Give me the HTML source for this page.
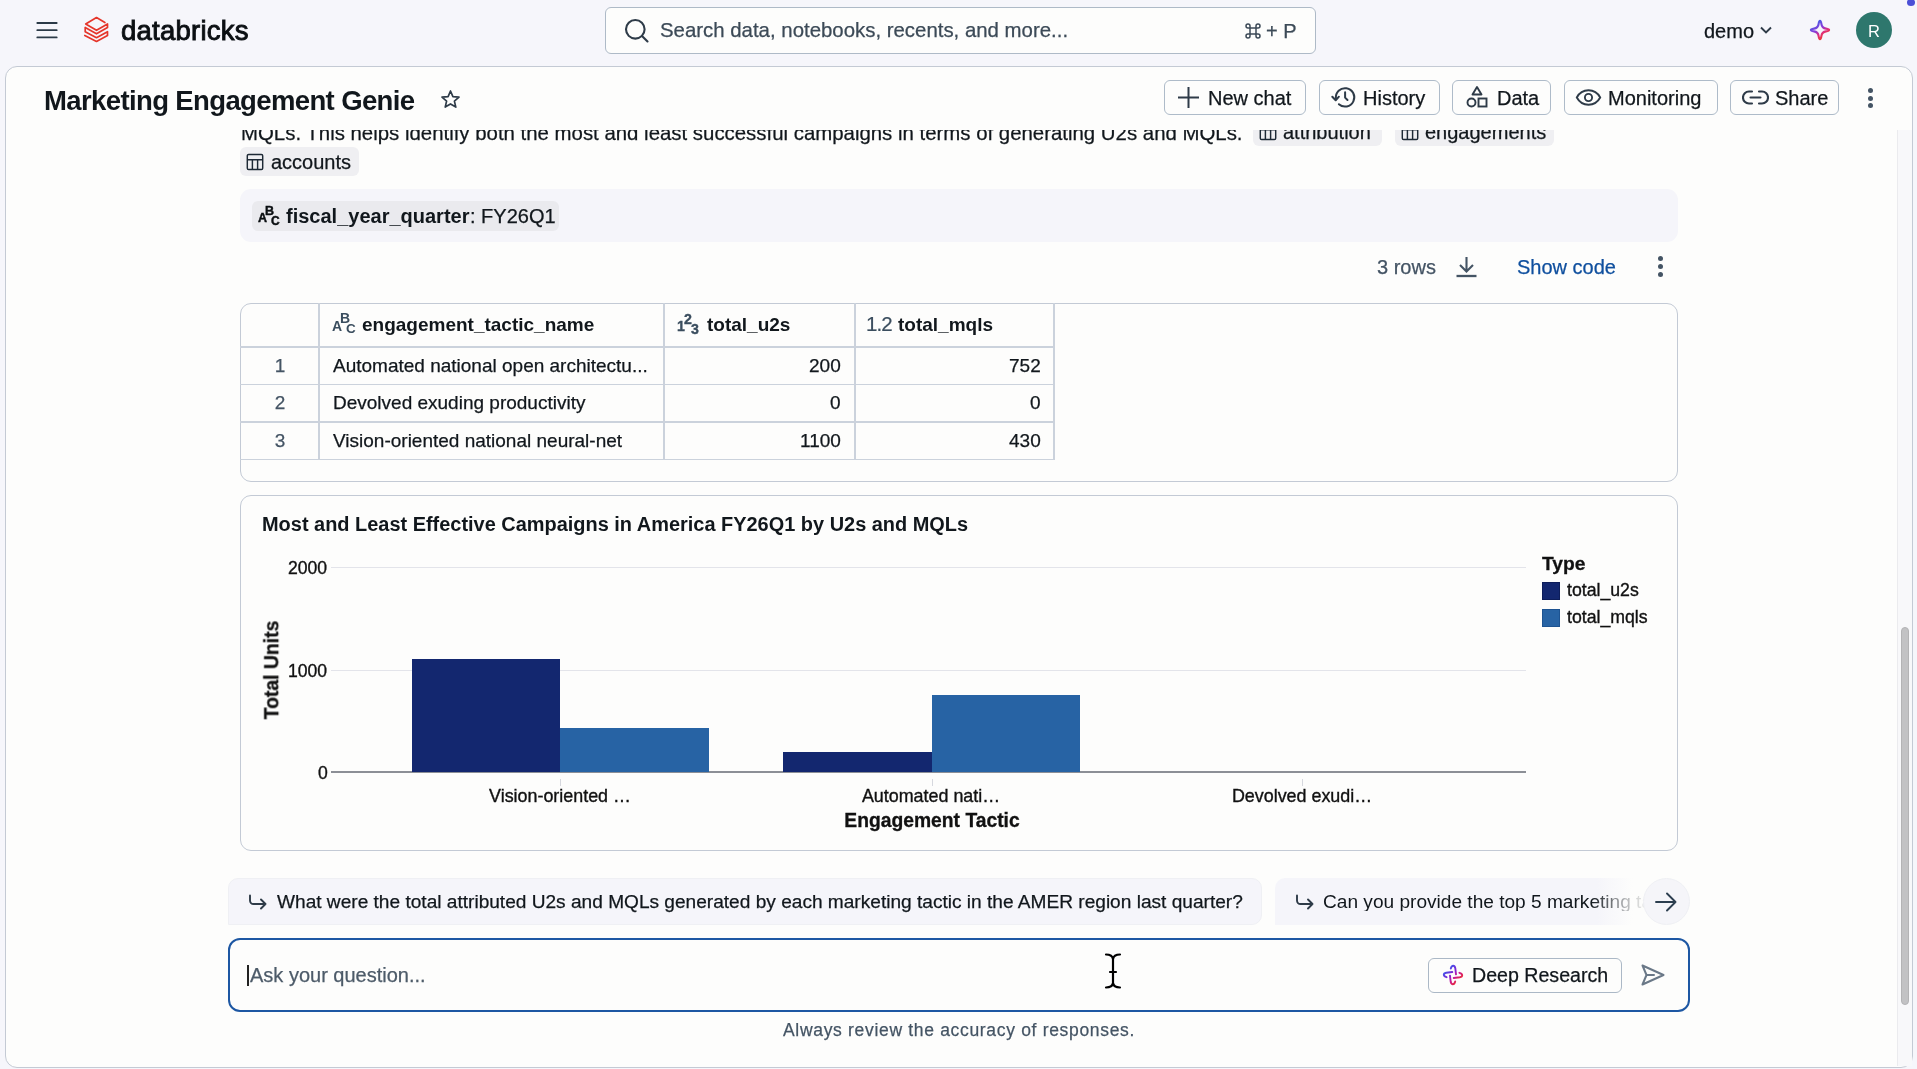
<!DOCTYPE html>
<html><head><meta charset="utf-8"><title>Marketing Engagement Genie</title>
<style>
*{box-sizing:border-box;margin:0;padding:0}
html,body{width:1917px;height:1069px;overflow:hidden;background:#f6f6fb;font-family:"Liberation Sans",sans-serif;color:#11171c;position:relative}
.a{position:absolute}
.t{position:absolute;white-space:nowrap;will-change:transform}
</style></head><body>

<svg class="a" style="left:35px;top:21px;" width="24" height="18" viewBox="0 0 24 18" fill="none"><path d="M2.3 2H21.7M2.3 9.2H21.7M2.3 16.4H21.7" stroke="#2b3a47" stroke-width="1.8" stroke-linecap="round"/></svg>
<svg class="a" style="left:80px;top:14px;" width="32" height="32" viewBox="0 0 32 32" fill="none"><path d="M24.9 8.5L16.5 3.6L5.7 9.9L16.5 16.3L27.5 9.9V13.5L16.5 19.8L5.2 13.5V17.7L16.5 23.7L27.5 17.7V21.6L16.5 27.5L4.8 21.4" stroke="#e5352a" stroke-width="1.7" stroke-linejoin="round" stroke-linecap="round"/></svg>
<div class="t" style="left:120.5px;top:16.52px;font-size:27.5px;line-height:27.5px;-webkit-text-stroke:0.25px #0b0f13;color:#0b0f13;-webkit-text-stroke:0.9px #0b0f13;letter-spacing:0.25px;">databricks</div>
<div class="a" style="left:605px;top:7px;width:711px;height:47px;border:1.5px solid #aebac7;border-radius:6px;background:#fdfdfc;"></div>
<svg class="a" style="left:624px;top:18px;" width="26" height="26" viewBox="0 0 26 26" fill="none"><circle cx="11.3" cy="11.3" r="9.3" stroke="#2e3b48" stroke-width="2.1"/><path d="M18 18L23.5 23.5" stroke="#2e3b48" stroke-width="2.1" stroke-linecap="round"/></svg>
<div class="t" style="left:659.5px;top:20.33px;font-size:20.4px;line-height:20.4px;-webkit-text-stroke:0.25px #3c4a57;color:#3c4a57;">Search data, notebooks, recents, and more...</div>
<svg class="a" style="left:1245px;top:23px;" width="16" height="16" viewBox="0 0 16 16" fill="none"><path d="M5 5H11V11H5Z M5 5V3A2 2 0 1 0 3 5H5 M11 5V3A2 2 0 1 1 13 5H11 M5 11V13A2 2 0 1 1 3 11H5 M11 11V13A2 2 0 1 0 13 11H11" stroke="#3c4a57" stroke-width="1.5"/></svg>
<div class="t" style="left:1266px;top:20.67px;font-size:20px;line-height:20px;-webkit-text-stroke:0.25px #3c4a57;color:#3c4a57;">+ P</div>
<div class="t" style="left:1703.5px;top:20.77px;font-size:20px;line-height:20px;-webkit-text-stroke:0.25px #11171c;color:#11171c;">demo</div>
<svg class="a" style="left:1759px;top:25px;" width="14" height="11" viewBox="0 0 14 11" fill="none"><path d="M2 2.5L7 7.5L12 2.5" stroke="#2e3b48" stroke-width="1.9"/></svg>
<svg class="a" style="left:1808px;top:18px;" width="24" height="24" viewBox="0 0 24 24" fill="none"><defs><linearGradient id="sg" gradientUnits="userSpaceOnUse" x1="6" y1="4" x2="17" y2="20"><stop offset="0" stop-color="#3d62e6"/><stop offset="0.45" stop-color="#8b3ad8"/><stop offset="0.7" stop-color="#e0307a"/><stop offset="1" stop-color="#f03a2a"/></linearGradient></defs><path d="M12 2.9C12.8 2.9 13.1 4 13.4 6C13.8 9 15 10.2 18 10.6C20 10.9 21.1 11.2 21.1 12C21.1 12.8 20 13.1 18 13.4C15 13.8 13.8 15 13.4 18C13.1 20 12.8 21.1 12 21.1C11.2 21.1 10.9 20 10.6 18C10.2 15 9 13.8 6 13.4C4 13.1 2.9 12.8 2.9 12C2.9 11.2 4 10.9 6 10.6C9 10.2 10.2 9 10.6 6C10.9 4 11.2 2.9 12 2.9Z" stroke="url(#sg)" stroke-width="2.1" stroke-linejoin="round"/></svg>
<div class="a" style="left:1856px;top:12px;width:36px;height:36px;border-radius:50%;background:#2e776d;"></div>
<div class="t" style="left:1874px;transform:translateX(-50%);top:22.73px;font-size:16.5px;line-height:16.5px;color:#ffffff;">R</div>
<div class="a" style="left:1907px;top:-1px;width:8px;height:7px;border-radius:50%;background:#4b4fd6;"></div>
<div class="a" style="left:5px;top:66px;width:1908px;height:1002px;border:1.5px solid #c4cad4;border-radius:12px;background:#fdfdfc;"></div>
<div class="a" style="left:0;top:130px;width:1897px;height:937px;overflow:hidden">
<div class="a" style="left:0;top:-130px;width:1917px;height:1069px">
<div class="t" style="left:240.6px;top:123.33px;font-size:20.4px;line-height:20.4px;-webkit-text-stroke:0.25px #11171c;color:#11171c;">MQLs. This helps identify both the most and least successful campaigns in terms of generating U2s and MQLs.</div>
<div class="a" style="left:1253px;top:117px;width:129px;height:29px;background:#efeff2;border-radius:6px;"></div>
<svg class="a" style="left:1259px;top:122.5px;" width="18" height="18" viewBox="0 0 18 18" fill="none"><rect x="1.3" y="1.5" width="15.4" height="15" rx="1.3" stroke="#1d2935" stroke-width="1.45"/><path d="M1.3 6.7H16.7 M6.4 6.7V16.5 M11.6 6.7V16.5" stroke="#1d2935" stroke-width="1.45"/></svg>
<div class="t" style="left:1282.5px;top:121.57px;font-size:20px;line-height:20px;-webkit-text-stroke:0.25px #11171c;color:#11171c;">attribution</div>
<div class="a" style="left:1395px;top:117px;width:159px;height:29px;background:#efeff2;border-radius:6px;"></div>
<svg class="a" style="left:1401px;top:122.5px;" width="18" height="18" viewBox="0 0 18 18" fill="none"><rect x="1.3" y="1.5" width="15.4" height="15" rx="1.3" stroke="#1d2935" stroke-width="1.45"/><path d="M1.3 6.7H16.7 M6.4 6.7V16.5 M11.6 6.7V16.5" stroke="#1d2935" stroke-width="1.45"/></svg>
<div class="t" style="left:1425px;top:121.57px;font-size:20px;line-height:20px;-webkit-text-stroke:0.25px #11171c;color:#11171c;">engagements</div>
<div class="a" style="left:240px;top:147px;width:119px;height:29px;background:#efeff2;border-radius:6px;"></div>
<svg class="a" style="left:246px;top:152.5px;" width="18" height="18" viewBox="0 0 18 18" fill="none"><rect x="1.3" y="1.5" width="15.4" height="15" rx="1.3" stroke="#1d2935" stroke-width="1.45"/><path d="M1.3 6.7H16.7 M6.4 6.7V16.5 M11.6 6.7V16.5" stroke="#1d2935" stroke-width="1.45"/></svg>
<div class="t" style="left:270.5px;top:151.57px;font-size:20px;line-height:20px;-webkit-text-stroke:0.25px #11171c;color:#11171c;">accounts</div>
<div class="a" style="left:240px;top:189px;width:1438px;height:53px;background:#f5f5fa;border-radius:11px;"></div>
<div class="a" style="left:252px;top:200.5px;width:307px;height:30.0px;background:#eaeaee;border-radius:6px;"></div>
<div class="t" style="left:257.7px;top:212.02px;font-size:12.5px;line-height:12.5px;font-weight:bold;color:#0b0f12;-webkit-text-stroke:0.45px #0b0f12;">A</div>
<div class="t" style="left:265.2px;top:204.62px;font-size:12.5px;line-height:12.5px;font-weight:bold;color:#0b0f12;-webkit-text-stroke:0.45px #0b0f12;">B</div>
<div class="t" style="left:270.9px;top:214.64px;font-size:12.0px;line-height:12.0px;font-weight:bold;color:#0b0f12;-webkit-text-stroke:0.45px #0b0f12;">C</div>
<div class="t" style="left:286px;top:206.17px;font-size:20px;line-height:20px;font-weight:bold;color:#11171c;">fiscal_year_quarter</div>
<div class="t" style="left:469.5px;top:206.17px;font-size:20px;line-height:20px;-webkit-text-stroke:0.25px #11171c;color:#11171c;">: FY26Q1</div>
<div class="t" style="left:1377px;top:256.97px;font-size:20px;line-height:20px;-webkit-text-stroke:0.25px #445464;color:#445464;">3 rows</div>
<svg class="a" style="left:1455px;top:255px;" width="23" height="23" viewBox="0 0 23 23" fill="none"><path d="M11.5 2V16 M5 10L11.5 16.5L18 10" stroke="#445464" stroke-width="2.1"/><path d="M1.5 21H21.5" stroke="#445464" stroke-width="2.3"/></svg>
<div class="t" style="left:1516.5px;top:256.97px;font-size:20px;line-height:20px;-webkit-text-stroke:0.25px #0f4f9e;color:#0f4f9e;">Show code</div>
<div class="a" style="left:1657.5px;top:256.0px;width:5.0px;height:5.0px;border-radius:50%;background:#445464;"></div>
<div class="a" style="left:1657.5px;top:264.0px;width:5.0px;height:5.0px;border-radius:50%;background:#445464;"></div>
<div class="a" style="left:1657.5px;top:272.0px;width:5.0px;height:5.0px;border-radius:50%;background:#445464;"></div>
<div class="a" style="left:240px;top:303px;width:1438px;height:179px;border:1.5px solid #c3cad5;border-radius:11px;"></div>
<div class="a" style="left:318px;top:303px;width:1.5px;height:156.5px;background:#cbd2dc;"></div>
<div class="a" style="left:663px;top:303px;width:1.5px;height:156.5px;background:#cbd2dc;"></div>
<div class="a" style="left:854px;top:303px;width:1.5px;height:156.5px;background:#cbd2dc;"></div>
<div class="a" style="left:1053px;top:303px;width:1.5px;height:156.5px;background:#cbd2dc;"></div>
<div class="a" style="left:240px;top:346px;width:814.5px;height:1.5px;background:#cbd2dc;"></div>
<div class="a" style="left:240px;top:383.5px;width:814.5px;height:1.5px;background:#cbd2dc;"></div>
<div class="a" style="left:240px;top:421px;width:814.5px;height:1.5px;background:#cbd2dc;"></div>
<div class="a" style="left:240px;top:458.5px;width:814.5px;height:1.5px;background:#cbd2dc;"></div>
<div class="t" style="left:331.5px;top:319.49px;font-size:14.000000000000002px;line-height:14.000000000000002px;font-weight:bold;color:#3a4d5e;-webkit-text-stroke:0px #3a4d5e;">A</div>
<div class="t" style="left:339.9px;top:311.20px;font-size:14.000000000000002px;line-height:14.000000000000002px;font-weight:bold;color:#3a4d5e;-webkit-text-stroke:0px #3a4d5e;">B</div>
<div class="t" style="left:346.284px;top:322.42px;font-size:13.440000000000001px;line-height:13.440000000000001px;font-weight:bold;color:#3a4d5e;-webkit-text-stroke:0px #3a4d5e;">C</div>
<div class="t" style="left:362px;top:315.11px;font-size:19px;line-height:19px;font-weight:bold;color:#11171c;">engagement_tactic_name</div>
<div class="t" style="left:676.8px;top:319.18px;font-size:14.2px;line-height:14.2px;font-weight:bold;color:#3a4d5e;-webkit-text-stroke:0.35px #3a4d5e;">1</div>
<div class="t" style="left:684.2px;top:311.68px;font-size:14.2px;line-height:14.2px;font-weight:bold;color:#3a4d5e;-webkit-text-stroke:0.35px #3a4d5e;">2</div>
<div class="t" style="left:691.2px;top:321.78px;font-size:14.2px;line-height:14.2px;font-weight:bold;color:#3a4d5e;-webkit-text-stroke:0.35px #3a4d5e;">3</div>
<div class="t" style="left:707px;top:315.11px;font-size:19px;line-height:19px;font-weight:bold;color:#11171c;">total_u2s</div>
<div class="t" style="left:865.5px;top:313.94px;font-size:20.5px;line-height:20.5px;-webkit-text-stroke:0.2px #3a4d5e;color:#3a4d5e;letter-spacing:-0.9px;">1.2</div>
<div class="t" style="left:898px;top:315.11px;font-size:19px;line-height:19px;font-weight:bold;color:#11171c;">total_mqls</div>
<div class="t" style="left:280px;transform:translateX(-50%);top:355.71px;font-size:19px;line-height:19px;-webkit-text-stroke:0.25px #445464;color:#445464;">1</div>
<div class="t" style="left:332.5px;top:355.71px;font-size:19px;line-height:19px;-webkit-text-stroke:0.25px #11171c;color:#11171c;">Automated national open architectu...</div>
<div class="t" style="right:1076px;top:355.71px;font-size:19px;line-height:19px;-webkit-text-stroke:0.25px #11171c;color:#11171c;">200</div>
<div class="t" style="right:876.5px;top:355.71px;font-size:19px;line-height:19px;-webkit-text-stroke:0.25px #11171c;color:#11171c;">752</div>
<div class="t" style="left:280px;transform:translateX(-50%);top:393.11px;font-size:19px;line-height:19px;-webkit-text-stroke:0.25px #445464;color:#445464;">2</div>
<div class="t" style="left:332.5px;top:393.11px;font-size:19px;line-height:19px;-webkit-text-stroke:0.25px #11171c;color:#11171c;">Devolved exuding productivity</div>
<div class="t" style="right:1076px;top:393.11px;font-size:19px;line-height:19px;-webkit-text-stroke:0.25px #11171c;color:#11171c;">0</div>
<div class="t" style="right:876.5px;top:393.11px;font-size:19px;line-height:19px;-webkit-text-stroke:0.25px #11171c;color:#11171c;">0</div>
<div class="t" style="left:280px;transform:translateX(-50%);top:430.51px;font-size:19px;line-height:19px;-webkit-text-stroke:0.25px #445464;color:#445464;">3</div>
<div class="t" style="left:332.5px;top:430.51px;font-size:19px;line-height:19px;-webkit-text-stroke:0.25px #11171c;color:#11171c;">Vision-oriented national neural-net</div>
<div class="t" style="right:1076px;top:430.51px;font-size:19px;line-height:19px;-webkit-text-stroke:0.25px #11171c;color:#11171c;">1100</div>
<div class="t" style="right:876.5px;top:430.51px;font-size:19px;line-height:19px;-webkit-text-stroke:0.25px #11171c;color:#11171c;">430</div>
<div class="a" style="left:240px;top:495px;width:1438px;height:356px;border:1.5px solid #c3cad5;border-radius:11px;"></div>
<div class="t" style="left:262px;top:514.71px;font-size:19.95px;line-height:19.95px;font-weight:bold;color:#11171c;">Most and Least Effective Campaigns in America FY26Q1 by U2s and MQLs</div>
<div class="a" style="left:331px;top:566.5px;width:1195px;height:1.5px;background:#e3e4ea;"></div>
<div class="a" style="left:331px;top:669.5px;width:1195px;height:1.5px;background:#e3e4ea;"></div>
<div class="a" style="left:331px;top:771px;width:1195px;height:2px;background:#8c8f96;"></div>
<div class="t" style="right:1589.5px;top:559.70px;font-size:17.6px;line-height:17.6px;-webkit-text-stroke:0.35px #111;color:#111;">2000</div>
<div class="t" style="right:1589.5px;top:663.00px;font-size:17.6px;line-height:17.6px;-webkit-text-stroke:0.35px #111;color:#111;">1000</div>
<div class="t" style="right:1589.5px;top:764.90px;font-size:17.6px;line-height:17.6px;-webkit-text-stroke:0.35px #111;color:#111;">0</div>
<div class="a" style="left:412px;top:659.3px;width:148px;height:112.70000000000005px;background:#13276f;"></div>
<div class="a" style="left:560px;top:728px;width:149px;height:44px;background:#2763a4;"></div>
<div class="a" style="left:783px;top:751.6px;width:148.5px;height:20.399999999999977px;background:#13276f;"></div>
<div class="a" style="left:931.5px;top:695px;width:148.5px;height:77px;background:#2763a4;"></div>
<div class="a" style="left:559.5px;top:779px;width:1.0px;height:7px;background:#d6d8de;"></div>
<div class="a" style="left:931.5px;top:779px;width:1.0px;height:7px;background:#d6d8de;"></div>
<div class="a" style="left:1301.5px;top:779px;width:1.0px;height:7px;background:#d6d8de;"></div>
<div class="t" style="left:560px;transform:translateX(-50%);top:788.44px;font-size:17.9px;line-height:17.9px;-webkit-text-stroke:0.35px #111;color:#111;">Vision-oriented …</div>
<div class="t" style="left:931px;transform:translateX(-50%);top:788.44px;font-size:17.9px;line-height:17.9px;-webkit-text-stroke:0.35px #111;color:#111;">Automated nati…</div>
<div class="t" style="left:1302px;transform:translateX(-50%);top:788.44px;font-size:17.9px;line-height:17.9px;-webkit-text-stroke:0.35px #111;color:#111;">Devolved exudi…</div>
<div class="t" style="left:932.4px;transform:translateX(-50%);top:810.56px;font-size:19.3px;line-height:19.3px;font-weight:bold;-webkit-text-stroke:0.3px #111;color:#111;">Engagement Tactic</div>
<div class="t" style="left:271.8px;top:669.5px;font-size:19.4px;line-height:19.4px;font-weight:bold;color:#111;-webkit-text-stroke:0.3px #111;transform:translate(-50%,-50%) rotate(-90deg)">Total Units</div>
<div class="t" style="left:1541.5px;top:554.04px;font-size:19.2px;line-height:19.2px;font-weight:bold;-webkit-text-stroke:0.3px #111;color:#111;">Type</div>
<div class="a" style="left:1541.5px;top:581.5px;width:18.0px;height:18.0px;background:#13276f;border:1px solid #0d1d5a;"></div>
<div class="a" style="left:1541.5px;top:608.5px;width:18.0px;height:18.0px;background:#2763a4;border:1px solid #1d5391;"></div>
<div class="t" style="left:1567px;top:581.91px;font-size:17.7px;line-height:17.7px;-webkit-text-stroke:0.35px #111;color:#111;">total_u2s</div>
<div class="t" style="left:1567px;top:608.91px;font-size:17.7px;line-height:17.7px;-webkit-text-stroke:0.35px #111;color:#111;">total_mqls</div>
<div class="a" style="left:228px;top:877px;width:1462px;height:48px;overflow:hidden">
<div class="a" style="left:-228px;top:-877px;width:1917px;height:1069px">
<div class="a" style="left:228px;top:877.5px;width:1034px;height:47.5px;background:#f5f5fa;border:1px solid #eff0f4;border-radius:10px 10px 10px 0;"></div>
<svg class="a" style="left:248px;top:893.5px;" width="20" height="16" viewBox="0 0 20 16" fill="none"><path d="M2 1.5V6.5A3.5 3.5 0 0 0 5.5 10H17.5 M13 5.5L17.5 10L13 14.5" stroke="#2e3b48" stroke-width="1.9" stroke-linecap="round" stroke-linejoin="round"/></svg>
<div class="t" style="left:277px;top:891.73px;font-size:19.1px;line-height:19.1px;-webkit-text-stroke:0.25px #11171c;color:#11171c;">What were the total attributed U2s and MQLs generated by each marketing tactic in the AMER region last quarter?</div>
<div class="a" style="left:1275px;top:877.5px;width:365px;height:47.5px;background:linear-gradient(90deg,#f5f5fa 0,#f5f5fa 322px,rgba(245,245,250,0) 358px);border-radius:10px 0 0 0;"></div>
<svg class="a" style="left:1294.5px;top:893.5px;" width="20" height="16" viewBox="0 0 20 16" fill="none"><path d="M2 1.5V6.5A3.5 3.5 0 0 0 5.5 10H17.5 M13 5.5L17.5 10L13 14.5" stroke="#2e3b48" stroke-width="1.9" stroke-linecap="round" stroke-linejoin="round"/></svg>
<div class="t" style="left:1323px;top:891.73px;font-size:19.1px;line-height:19.1px;color:#11171c;-webkit-mask-image:linear-gradient(90deg,#000 0,#000 268px,rgba(0,0,0,0.35) 300px,rgba(0,0,0,0) 328px);width:340px;overflow:hidden">Can you provide the top 5 marketing tactics</div>
</div></div>
<div class="a" style="left:1643px;top:877.5px;width:47px;height:47.0px;border-radius:50%;background:#f5f5f9;border:1px solid #eeeff3;"></div>
<svg class="a" style="left:1654px;top:891px;" width="24" height="22" viewBox="0 0 24 22" fill="none"><path d="M2 11H21.5 M13 2.5L21.5 11L13 19.5" stroke="#2c3e4f" stroke-width="1.9" stroke-linecap="round" stroke-linejoin="round"/></svg>
<div class="a" style="left:228px;top:938px;width:1462px;height:74px;border:2px solid #1d57a3;border-radius:12px;background:#fdfdfc;"></div>
<div class="a" style="left:247px;top:964.5px;width:1.5999999999999943px;height:21.5px;background:#222;"></div>
<div class="t" style="left:249.5px;top:965.47px;font-size:20px;line-height:20px;-webkit-text-stroke:0.25px #4d5b69;color:#4d5b69;">Ask your question...</div>
<div class="a" style="left:1428px;top:957.5px;width:194px;height:35.0px;border:1.5px solid #abb8c6;border-radius:6px;background:#fdfdfc;"></div>
<svg class="a" style="left:1438px;top:960px;" width="30" height="30" viewBox="0 0 30 30" fill="none"><defs><linearGradient id="dg" gradientUnits="userSpaceOnUse" x1="8" y1="8" x2="22" y2="22"><stop offset="0" stop-color="#2f5ef0"/><stop offset="0.45" stop-color="#8a1fd0"/><stop offset="0.62" stop-color="#c8189a"/><stop offset="1" stop-color="#f2311c"/></linearGradient></defs><path d="M12.8 8.6C13.3 6.6 14.0 5.8 15.2 5.8C16.4 5.8 17.0 6.8 17.3 8.2L18.0 14.3 M21.4 12.8C23.4 13.3 24.2 14.0 24.2 15.2C24.2 16.4 23.2 17.0 21.8 17.3L15.7 18.0 M17.2 21.4C16.7 23.4 16.0 24.2 14.8 24.2C13.6 24.2 13.0 23.2 12.7 21.8L12.0 15.7 M8.6 17.2C6.6 16.7 5.8 16.0 5.8 14.8C5.8 13.6 6.8 13.0 8.2 12.7L14.3 12.0" stroke="url(#dg)" stroke-width="1.9" stroke-linecap="round"/></svg>
<div class="t" style="left:1472px;top:966.40px;font-size:19.6px;line-height:19.6px;-webkit-text-stroke:0.25px #11171c;color:#11171c;">Deep Research</div>
<svg class="a" style="left:1640px;top:963px;" width="26" height="24" viewBox="0 0 26 24" fill="none"><path d="M2.5 2.5L23.5 12L2.5 21.5L6.5 12Z M6.5 12H14" stroke="#6a7887" stroke-width="2" stroke-linejoin="round" stroke-linecap="round"/></svg>
<svg class="a" style="left:1103px;top:951px;" width="20" height="40" viewBox="0 0 20 40" fill="none"><g stroke-linecap="round"><path d="M3 3.5C6.5 3.5 9.5 5 10 8V32C9.5 35 6.5 36.5 3 36.5 M17 3.5C13.5 3.5 10.5 5 10 8 M10 32C10.5 35 13.5 36.5 17 36.5 M7 21H13" stroke="#fff" stroke-width="4.5"/><path d="M3 3.5C6.5 3.5 9.5 5 10 8V32C9.5 35 6.5 36.5 3 36.5 M17 3.5C13.5 3.5 10.5 5 10 8 M10 32C10.5 35 13.5 36.5 17 36.5 M7 21H13" stroke="#000" stroke-width="2.2"/></g></svg>
<div class="t" style="left:783px;top:1021.98px;font-size:17.5px;line-height:17.5px;-webkit-text-stroke:0.25px #445464;color:#445464;letter-spacing:0.68px;">Always review the accuracy of responses.</div>
</div></div>
<div class="t" style="left:44px;top:87.12px;font-size:27.5px;line-height:27.5px;font-weight:bold;color:#11171c;letter-spacing:-0.62px;">Marketing Engagement Genie</div>
<svg class="a" style="left:440px;top:89px;" width="21" height="21" viewBox="0 0 21 21" fill="none"><path d="M10.5 2L12.9 7.6L19 8.1L14.4 12.1L15.8 18.1L10.5 14.9L5.2 18.1L6.6 12.1L2 8.1L8.1 7.6Z" stroke="#2e3b48" stroke-width="1.7" stroke-linejoin="round"/></svg>
<div class="a" style="left:1164px;top:80px;width:142px;height:35px;border:1.5px solid #aebbc9;border-radius:6px;background:#fdfdfc;"></div>
<div class="t" style="left:1208px;top:88.07px;font-size:20px;line-height:20px;-webkit-text-stroke:0.25px #11171c;color:#11171c;">New chat</div>
<svg class="a" style="left:1177px;top:86px;" width="23" height="23" viewBox="0 0 23 23" fill="none"><path d="M11.5 1V22 M1 11.5H22" stroke="#2e3b48" stroke-width="2"/></svg>
<div class="a" style="left:1318.5px;top:80px;width:121.5px;height:35px;border:1.5px solid #aebbc9;border-radius:6px;background:#fdfdfc;"></div>
<div class="t" style="left:1362.5px;top:88.07px;font-size:20px;line-height:20px;-webkit-text-stroke:0.25px #11171c;color:#11171c;">History</div>
<svg class="a" style="left:1326px;top:82px;" width="34" height="30" viewBox="0 0 34 30" fill="none"><path d="M12.9 22.2A9.2 9.2 0 1 0 9.95 16.6" stroke="#2e3b48" stroke-width="2" stroke-linecap="round"/><path d="M6.3 14.7L9.7 18.3L12.9 14.7" stroke="#2e3b48" stroke-width="2" stroke-linecap="round" stroke-linejoin="round"/><path d="M19.1 10.2V15.6L21.5 18" stroke="#2e3b48" stroke-width="2" stroke-linecap="round" stroke-linejoin="round"/></svg>
<div class="a" style="left:1452px;top:80px;width:99px;height:35px;border:1.5px solid #aebbc9;border-radius:6px;background:#fdfdfc;"></div>
<div class="t" style="left:1496.5px;top:88.07px;font-size:20px;line-height:20px;-webkit-text-stroke:0.25px #11171c;color:#11171c;">Data</div>
<svg class="a" style="left:1465px;top:85px;" width="25" height="24" viewBox="0 0 25 24" fill="none"><path d="M12 2L16.5 9.5H7.5Z" stroke="#2e3b48" stroke-width="1.9" stroke-linejoin="round"/><circle cx="6.5" cy="17.5" r="4" stroke="#2e3b48" stroke-width="1.9"/><rect x="13.5" y="13.5" width="8" height="8" stroke="#2e3b48" stroke-width="1.9"/></svg>
<div class="a" style="left:1564px;top:80px;width:154px;height:35px;border:1.5px solid #aebbc9;border-radius:6px;background:#fdfdfc;"></div>
<div class="t" style="left:1607.5px;top:88.07px;font-size:20px;line-height:20px;-webkit-text-stroke:0.25px #11171c;color:#11171c;">Monitoring</div>
<svg class="a" style="left:1575px;top:86px;" width="27" height="23" viewBox="0 0 27 23" fill="none"><path d="M1.8 11.5C4.5 6.5 8.5 4.3 13.5 4.3C18.5 4.3 22.5 6.5 25.2 11.5C22.5 16.5 18.5 18.7 13.5 18.7C8.5 18.7 4.5 16.5 1.8 11.5Z" stroke="#2e3b48" stroke-width="1.9"/><circle cx="13.5" cy="11.5" r="3.6" stroke="#2e3b48" stroke-width="1.9"/></svg>
<div class="a" style="left:1730px;top:80px;width:109px;height:35px;border:1.5px solid #aebbc9;border-radius:6px;background:#fdfdfc;"></div>
<div class="t" style="left:1774.5px;top:88.07px;font-size:20px;line-height:20px;-webkit-text-stroke:0.25px #11171c;color:#11171c;">Share</div>
<svg class="a" style="left:1742px;top:88px;" width="27" height="19" viewBox="0 0 27 19" fill="none"><path d="M10 3.5H7A6 6 0 0 0 7 15.5H10 M17 3.5H20A6 6 0 0 1 20 15.5H17 M8.5 9.5H18.5" stroke="#2e3b48" stroke-width="2.1" stroke-linecap="round"/></svg>
<div class="a" style="left:1867.5px;top:87.7px;width:5.0px;height:5.0px;border-radius:50%;background:#445464;"></div>
<div class="a" style="left:1867.5px;top:95.5px;width:5.0px;height:5.0px;border-radius:50%;background:#445464;"></div>
<div class="a" style="left:1867.5px;top:103.2px;width:5.0px;height:5.0px;border-radius:50%;background:#445464;"></div>
<div class="a" style="left:1896.5px;top:130px;width:1.0px;height:936px;background:#ebebee;"></div>
<div class="a" style="left:1897.5px;top:130px;width:14.0px;height:936px;background:#f8f8fa;"></div>
<div class="a" style="left:1900.5px;top:626.5px;width:8.0px;height:378.5px;background:#c2c2c4;border:1px solid #b3b3b5;border-radius:4px;"></div>
</body></html>
